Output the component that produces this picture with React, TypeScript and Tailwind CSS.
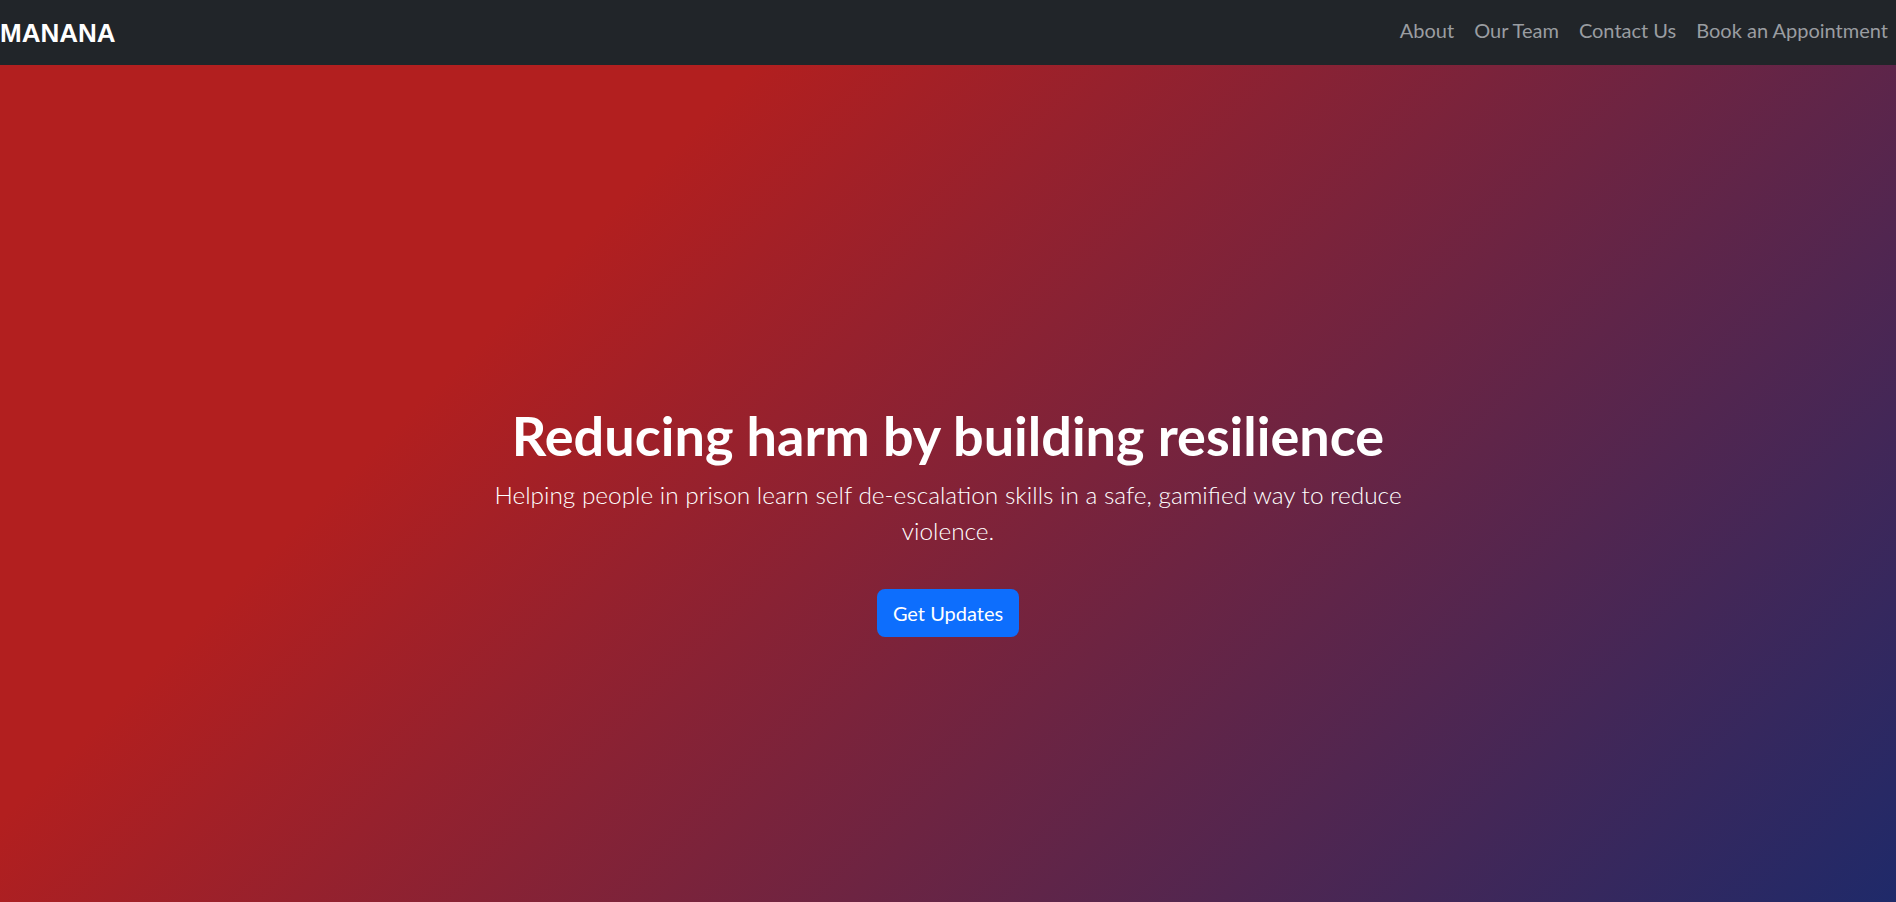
const navLinks = ['About', 'Our Team', 'Contact Us', 'Book an Appointment'];

export default function App() {
  return (
    <div className="min-h-screen font-['Lato',sans-serif]">
      <nav className="h-[65px] bg-[#212529] flex items-center justify-between">
        <a href="#" className="font-['Liberation_Sans',Arial,sans-serif] font-bold text-[26px] text-white leading-none">
          MANANA
        </a>
        <ul className="flex items-center gap-[4px] pb-[6px]">
          {navLinks.map((link) => (
            <li key={link}>
              <a href="#" className="px-2 text-[20px] text-[#9a9da1] hover:text-white">
                {link}
              </a>
            </li>
          ))}
        </ul>
      </nav>

      <section className="h-screen flex items-center justify-center bg-[linear-gradient(135deg,#b21f1f_27%,#1a2a6c)] text-white">
        <div className="flex flex-col items-center text-center pt-[6px]">
          <h1 className="font-bold text-[54px] leading-[67px] mb-2">Reducing harm by building resilience</h1>
          <p className="font-light text-[24.4px] leading-[36px] max-w-[930px]">
            Helping people in prison learn self de-escalation skills in a safe, gamified way to reduce violence.
          </p>
          <button className="mt-10 px-4 h-[48px] rounded-lg bg-[#0d6efd] text-[20px] text-white whitespace-nowrap hover:bg-blue-700">
            Get Updates
          </button>
        </div>
      </section>
    </div>
  );
}
